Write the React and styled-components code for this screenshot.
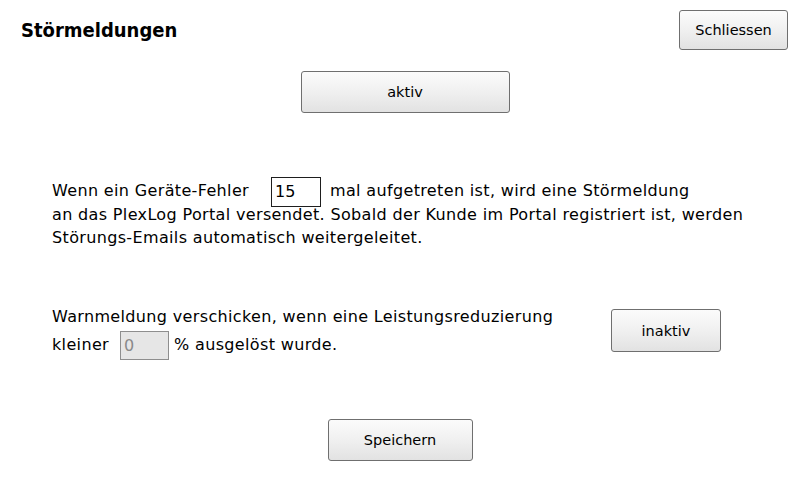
import React from "react";
import styled, { createGlobalStyle } from "styled-components";

const GlobalStyle = createGlobalStyle`
  html, body {
    margin: 0;
    padding: 0;
    background: #ffffff;
  }
  body {
    font-family: "DejaVu Sans", Verdana, sans-serif;
    color: #000000;
  }
`;

const Page = styled.div`
  width: 800px;
  height: 480px;
  box-sizing: border-box;
  display: flex;
  flex-direction: column;
  overflow: hidden;
`;

const Header = styled.div`
  display: flex;
  justify-content: space-between;
  align-items: center;
  padding: 10px 12px 0 21px;
`;

const Title = styled.h1`
  margin: 0;
  font-size: 20px;
  font-weight: bold;
  font-stretch: condensed;
`;

const Button = styled.button`
  width: ${(p) => p.$w}px;
  height: ${(p) => p.$h}px;
  padding: 0;
  box-sizing: border-box;
  border: 1px solid #6f6f6f;
  border-radius: 3px;
  background: linear-gradient(#fbfbfb, #f0f0f0 50%, #e2e2e2);
  font-family: "DejaVu Sans", Verdana, sans-serif;
  font-size: 14.5px;
  color: #000000;
`;

const CenterRow = styled.div`
  display: flex;
  justify-content: center;
  margin-top: ${(p) => p.$top}px;
  padding-left: ${(p) => p.$shift || 0}px;
`;

const Paragraph = styled.p`
  margin: ${(p) => p.$top || 0}px 0 0 52px;
  font-size: 16px;
  letter-spacing: 0.35px;
  line-height: ${(p) => p.$lh}px;
`;

const NumberInput = styled.input`
  box-sizing: border-box;
  width: ${(p) => p.$w}px;
  height: ${(p) => p.$h}px;
  margin: -4px ${(p) => p.$right}px -4px ${(p) => p.$left}px;
  padding: 0 0 0 3px;
  vertical-align: middle;
  font-family: "DejaVu Sans", Verdana, sans-serif;
  font-size: 16px;
  border: 1px solid ${(p) => (p.disabled ? "#8e8e8e" : "#1e1e1e")};
  background: ${(p) => (p.disabled ? "#e6e6e6" : "#ffffff")};
  color: ${(p) => (p.disabled ? "#8a8a8a" : "#000000")};
  outline: none;
`;

const WarnRow = styled.div`
  display: flex;
  align-items: center;
  margin-top: 54px;
`;

const WarnText = styled(Paragraph)`
  margin-top: 0;
  width: 559px;
  flex: none;
`;

export default function App() {
  return (
    <>
      <GlobalStyle />
      <Page>
        <Header>
          <Title>Störmeldungen</Title>
          <Button $w={109} $h={40}>Schliessen</Button>
        </Header>

        <CenterRow $top={21} $shift={10}>
          <Button $w={209} $h={42}>aktiv</Button>
        </CenterRow>

        <Paragraph $top={66} $lh={23}>
          Wenn ein Geräte-Fehler
          <NumberInput $w={50} $h={30} $left={22} $right={9} defaultValue="15" readOnly />
          mal aufgetreten ist, wird eine Störmeldung
          <br />
          an das PlexLog Portal versendet. Sobald der Kunde im Portal registriert ist, werden
          <br />
          Störungs-Emails automatisch weitergeleitet.
        </Paragraph>

        <WarnRow>
          <WarnText $lh={28}>
            Warnmeldung verschicken, wenn eine Leistungsreduzierung
            <br />
            kleiner
            <NumberInput $w={49} $h={29} $left={11} $right={5} defaultValue="0" disabled />
            % ausgelöst wurde.
          </WarnText>
          <Button $w={110} $h={43}>inaktiv</Button>
        </WarnRow>

        <CenterRow $top={60}>
          <Button $w={145} $h={42}>Speichern</Button>
        </CenterRow>
      </Page>
    </>
  );
}
